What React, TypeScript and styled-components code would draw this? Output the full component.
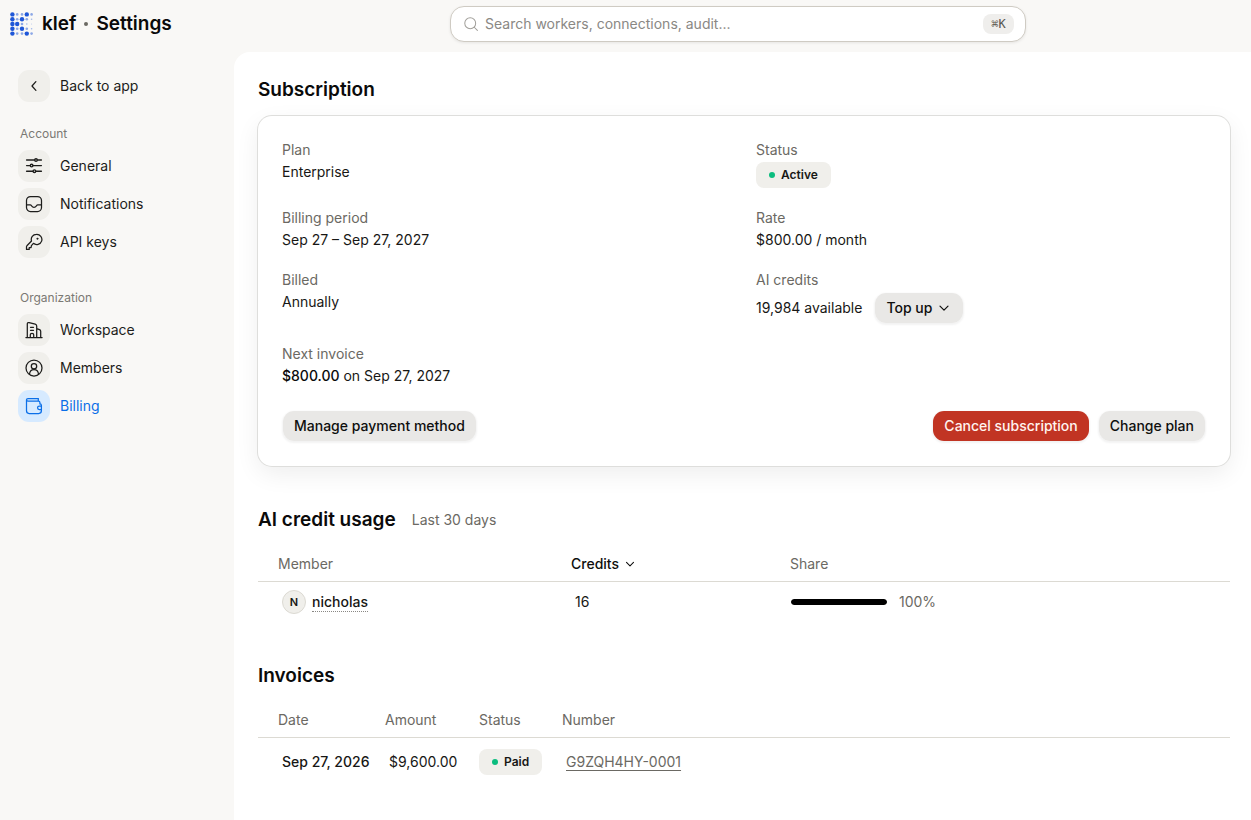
import React from "react";
import styled, { createGlobalStyle, css } from "styled-components";

const GlobalStyle = createGlobalStyle`
  *, *::before, *::after { box-sizing: border-box; }
  html, body { margin: 0; padding: 0; }
  body {
    background: #f9f8f6;
    color: #171715;
    font-family: Inter, "Liberation Sans", sans-serif;
    font-size: 14px;
    line-height: 20px;
  }
  h1, h2, h3, dl, dd, dt, p, ul { margin: 0; padding: 0; }
  ul { list-style: none; }
  button, input { font: inherit; color: inherit; }
`;

const Shell = styled.div`
  display: flex;
  flex-direction: column;
  min-height: 100vh;
`;

const Header = styled.header`
  display: flex;
  align-items: center;
  height: 52px;
  padding: 0 9px 4px 10px;
`;

const Brand = styled.h1`
  display: flex;
  align-items: center;
  gap: 8px;
  width: 224px;
  flex-shrink: 0;
  font-size: 19px;
  line-height: 28px;
  font-weight: 600;
  color: #0a0a0a;
`;

const BrandDot = styled.span`
  width: 4px;
  height: 4px;
  border-radius: 50%;
  background: #6b6963;
`;

const SearchArea = styled.div`
  flex: 1;
  display: flex;
  justify-content: center;
`;

const SearchBox = styled.label`
  display: flex;
  align-items: center;
  gap: 7px;
  width: 100%;
  max-width: 576px;
  height: 36px;
  padding: 0 11px 0 13px;
  border: 1px solid #cfcbc3;
  border-radius: 14px;
  background: #fff;
  box-shadow: 0 1px 3px rgba(0, 0, 0, 0.08);
  color: #a09e99;
`;

const SearchInput = styled.input`
  flex: 1;
  min-width: 0;
  padding: 0;
  border: 0;
  outline: 0;
  background: transparent;
  color: #171715;
  &::placeholder { color: #8a8884; opacity: 1; }
`;

const Shortcut = styled.kbd`
  display: flex;
  align-items: center;
  justify-content: center;
  width: 31px;
  height: 20px;
  border-radius: 8px;
  background: #efeeec;
  color: #57544e;
  font-family: "DejaVu Sans Mono", monospace;
  font-size: 12px;
`;

const Body = styled.div`
  flex: 1;
  display: flex;
`;

const Sidebar = styled.nav`
  width: 234px;
  flex-shrink: 0;
  padding: 18px;
`;

const NavList = styled.ul`
  display: flex;
  flex-direction: column;
  gap: 6px;
`;

const NavGroup = styled.section<{ $gap: number }>`
  margin-top: ${(p) => p.$gap}px;
`;

const NavHeading = styled.h2`
  padding-left: 2px;
  margin-bottom: 8px;
  font-size: 12px;
  line-height: 16px;
  font-weight: 400;
  color: #7b7974;
`;

const NavIcon = styled.span<{ $active?: boolean }>`
  display: flex;
  align-items: center;
  justify-content: center;
  width: 32px;
  height: 32px;
  border-radius: 11px;
  background: ${(p) => (p.$active ? "#d6eaff" : "#f0efeb")};
`;

const NavLink = styled.a<{ $active?: boolean }>`
  display: flex;
  align-items: center;
  gap: 10px;
  color: ${(p) => (p.$active ? "#0b6fe8" : "#1d1d1b")};
  text-decoration: none;
`;

const Main = styled.main`
  flex: 1;
  min-width: 0;
  display: flex;
  flex-direction: column;
  gap: 40px;
  padding: 24px 21px 34px 24px;
  border-top-left-radius: 16px;
  background: #fff;
`;

const SectionHead = styled.div`
  display: flex;
  align-items: center;
  gap: 16px;
  margin-bottom: 12px;
`;

const SectionTitle = styled.h2`
  font-size: 19px;
  line-height: 28px;
  font-weight: 600;
  color: #0a0a0a;
`;

const Muted = styled.span`
  color: #6b6963;
`;

const Card = styled.div`
  padding: 24px;
  border-radius: 14px;
  background: #fff;
  box-shadow: 0 0 0 1px #dededc, 0 8px 24px rgba(0, 0, 0, 0.07);
`;

const Details = styled.dl`
  display: grid;
  grid-template-columns: 1fr 1fr;
  gap: 20px 24px;
`;

const Detail = styled.div`
  display: flex;
  flex-direction: column;
  gap: 2px;
  dt { color: #6b6963; }
  dd { display: flex; align-items: center; gap: 12px; }
  strong { font-weight: 500; color: #0a0a0a; }
`;

const Badge = styled.span`
  display: inline-flex;
  align-items: center;
  gap: 6px;
  height: 26px;
  padding: 0 13px;
  border-radius: 8px;
  background: #f0efeb;
  color: #171715;
  font-size: 12px;
  line-height: 16px;
  font-weight: 600;
  vertical-align: middle;
  &::before {
    content: "";
    width: 6px;
    height: 6px;
    border-radius: 50%;
    background: #0bbd7f;
  }
`;

const Button = styled.button<{ $danger?: boolean }>`
  display: inline-flex;
  align-items: center;
  gap: 4px;
  height: 32px;
  padding: 0 11px;
  border: 1px solid transparent;
  border-radius: 12px;
  background: #e9e8e6;
  background-clip: padding-box;
  box-shadow: 0 1px 2px rgba(0, 0, 0, 0.05);
  color: #0f0f0e;
  font-weight: 500;
  white-space: nowrap;
  cursor: pointer;
  ${(p) =>
    p.$danger &&
    css`
      background: #c13423;
      background-clip: padding-box;
      color: #fff3ef;
    `}
`;

const Actions = styled.div`
  display: flex;
  gap: 8px;
  margin-top: 24px;
`;

const Spacer = styled.div`
  flex: 1;
`;

const Table = styled.table`
  width: 100%;
  table-layout: fixed;
  border-collapse: separate;
  border-spacing: 0;
  text-align: left;
`;

const Col = styled.col<{ $width?: number }>`
  width: ${(p) => (p.$width ? `${p.$width}px` : "auto")};
`;

const Th = styled.th`
  height: 36px;
  padding: 0;
  border-bottom: 1px solid #dcdad3;
  color: #6b6963;
  font-weight: 400;
  white-space: nowrap;
  &:first-child { padding-left: 20px; }
`;

const Td = styled.td<{ $height: number; $flush?: boolean; $strong?: boolean }>`
  height: ${(p) => p.$height}px;
  padding: 0 0 0 ${(p) => (p.$flush ? 0 : 4)}px;
  font-weight: ${(p) => (p.$strong ? 500 : 400)};
  white-space: nowrap;
  &:first-child { padding-left: 24px; }
`;

const SortButton = styled.button`
  display: flex;
  align-items: center;
  gap: 4px;
  padding: 0;
  border: 0;
  background: none;
  color: #0f0f0e;
  font-weight: 500;
  cursor: pointer;
`;

const Member = styled.div`
  display: flex;
  align-items: center;
  gap: 6px;
`;

const Avatar = styled.span`
  display: flex;
  align-items: center;
  justify-content: center;
  width: 24px;
  height: 24px;
  border: 1px solid #dcdad3;
  border-radius: 50%;
  background: #f0efeb;
  font-size: 11px;
  font-weight: 600;
`;

const MemberName = styled.span`
  border-bottom: 1px dotted #8a8884;
  line-height: 18px;
  font-weight: 500;
`;

const Share = styled.div`
  display: flex;
  align-items: center;
  gap: 12px;
  padding-left: 1px;
`;

const Track = styled.div`
  width: 96px;
  height: 6px;
  border-radius: 3px;
  background: #e9e8e6;
  overflow: hidden;
`;

const Fill = styled.div`
  height: 100%;
  border-radius: 3px;
  background: #000;
`;

const InvoiceLink = styled.a`
  color: #6b6963;
  text-decoration: underline;
  text-underline-offset: 3px;
`;

const Icon = ({ size = 18, width = 1.25, children }: { size?: number; width?: number; children: React.ReactNode }) => (
  <svg
    width={size}
    height={size}
    viewBox="0 0 18 18"
    fill="none"
    stroke="currentColor"
    strokeWidth={width}
    strokeLinecap="round"
    strokeLinejoin="round"
    aria-hidden="true"
  >
    {children}
  </svg>
);

const Chevron = ({ size = 16 }: { size?: number }) => (
  <svg width={size} height={size} viewBox="0 0 16 16" fill="none" stroke="currentColor" strokeWidth={1.2} strokeLinecap="round" strokeLinejoin="round" aria-hidden="true">
    <path d="M4 6.2 8 10.2 12 6.2" />
  </svg>
);

const icons = {
  back: <path d="M10.9 4.6 7 9l3.9 4.4" />,
  general: (
    <>
      <path d="M1.600 3H9.400M12.700 3h3.700M1.600 8.600h3.400M8.100 8.600h8.300M1.600 14.200h6.200M11 14.200h5.400" strokeWidth="1.400" />
      <circle cx="11" cy="3" r="1.300" strokeWidth="1.400" />
      <circle cx="6.600" cy="8.600" r="1.300" strokeWidth="1.400" />
      <circle cx="9.400" cy="14.200" r="1.300" strokeWidth="1.400" />
    </>
  ),
  notifications: (
    <>
      <rect x="1.5" y="1.5" width="15" height="15" rx="4" />
      <path d="M1.7 9.800h3.500c.9 0 1.100.6 1.600 1.300.5.8 1.200 1.200 2.200 1.200s1.700-.4 2.200-1.200c.5-.7.7-1.300 1.600-1.300h3.500" />
    </>
  ),
  keys: (
    <>
      <path d="M11.400 1.400a5.100 5.100 0 0 0-4.900 6.600L1.900 12.800a1.600 1.600 0 0 0-.4 1.100v2.500h2.700v-1.900h1.900l.3-1.900 2-2.300a5.100 5.100 0 1 0 3-8.900Z" />
      <circle cx="12.400" cy="5.700" r=".7" fill="currentColor" strokeWidth=".5" />
    </>
  ),
  workspace: (
    <>
      <path d="M.9 16.500h16.200M2.300 16.500V3.100c0-1.100.7-1.800 1.800-1.500l6.100 1.600c1 .3 1.500.9 1.500 1.900v11.400M11.700 7.600l2.800 1.100c.8.3 1.200.8 1.200 1.600v6.200" />
      <path d="M5.500 6.300h3M5.500 9.300h3M5.300 16.300v-2.500c0-.8.6-1.400 1.700-1.400s1.700.6 1.700 1.400v2.500" />
    </>
  ),
  members: (
    <>
      <circle cx="9" cy="9" r="8" />
      <circle cx="9" cy="7.200" r="2.700" />
      <path d="M4.500 15.300c.2-2.800 2-4.700 4.500-4.700s4.300 1.900 4.500 4.700" />
    </>
  ),
  billing: (
    <>
      <path d="M14.900 6.900V5.600c0-.9-.6-1.500-1.500-1.500H3c-.9 0-1.500-.5-1.500-1.300S2.100 1.500 3 1.500h10.200M1.500 2.800v11c0 1.700.9 2.700 2.700 2.700h9.400c1.800 0 2.800-1 2.800-2.700V8.500c0-1-.5-1.600-1.500-1.600M13.300 1.500v2.400" />
      <path d="M16.400 9h-2.100a1.700 1.700 0 0 0 0 3.500h2.100" />
    </>
  ),
};

type IconName = keyof typeof icons;

const NavItem = ({ icon, label, active }: { icon: IconName; label: string; active?: boolean }) => (
  <NavLink href="#" $active={active} aria-current={active ? "page" : undefined}>
    <NavIcon $active={active}>
      <Icon>{icons[icon]}</Icon>
    </NavIcon>
    {label}
  </NavLink>
);

const groups: { title: string; gap: number; items: { icon: IconName; label: string; active?: boolean }[] }[] = [
  {
    title: "Account",
    gap: 24,
    items: [
      { icon: "general", label: "General" },
      { icon: "notifications", label: "Notifications" },
      { icon: "keys", label: "API keys" },
    ],
  },
  {
    title: "Organization",
    gap: 32,
    items: [
      { icon: "workspace", label: "Workspace" },
      { icon: "members", label: "Members" },
      { icon: "billing", label: "Billing", active: true },
    ],
  },
];

/* Dot-matrix K: the digit is the dot's strength, 4 the strongest. */
const logoRows = ["42242", "42421", "44210", "42421", "42242"];
const dotRadius = [0.5, 0.8, 1.3, 1.8, 2.2];
const dotOpacity = [0.3, 0.4, 0.5, 0.8, 1];

const Logo = () => (
  <svg width="24" height="24" viewBox="0 0 24 24" fill="#1f57d8" aria-hidden="true">
    {logoRows.flatMap((row, y) =>
      row.split("").map((level, x) => (
        <circle
          key={`${x}-${y}`}
          cx={2.4 + x * 4.8}
          cy={2.4 + y * 4.8}
          r={dotRadius[Number(level)]}
          opacity={dotOpacity[Number(level)]}
        />
      ))
    )}
  </svg>
);

export default function App() {
  const share = 100;
  return (
    <>
      <GlobalStyle />
      <Shell>
        <Header>
          <Brand>
            <Logo />
            <span>klef</span>
            <BrandDot />
            <span>Settings</span>
          </Brand>
          <SearchArea>
            <SearchBox>
              <Icon size={14} width={1.3}>
                <circle cx="8" cy="8" r="7" />
                <path d="m13.200 13.200 4 4" />
              </Icon>
              <SearchInput type="text" aria-label="Search" placeholder="Search workers, connections, audit..." />
              <Shortcut>⌘K</Shortcut>
            </SearchBox>
          </SearchArea>
        </Header>
        <Body>
          <Sidebar>
            <NavItem icon="back" label="Back to app" />
            {groups.map((group) => (
              <NavGroup key={group.title} $gap={group.gap}>
                <NavHeading>{group.title}</NavHeading>
                <NavList>
                  {group.items.map((item) => (
                    <li key={item.label}>
                      <NavItem {...item} />
                    </li>
                  ))}
                </NavList>
              </NavGroup>
            ))}
          </Sidebar>
          <Main>
            <section>
              <SectionHead>
                <SectionTitle>Subscription</SectionTitle>
              </SectionHead>
              <Card>
                <Details>
                  <Detail>
                    <dt>Plan</dt>
                    <dd>Enterprise</dd>
                  </Detail>
                  <Detail>
                    <dt>Status</dt>
                    <dd><Badge>Active</Badge></dd>
                  </Detail>
                  <Detail>
                    <dt>Billing period</dt>
                    <dd>Sep 27 – Sep 27, 2027</dd>
                  </Detail>
                  <Detail>
                    <dt>Rate</dt>
                    <dd>$800.00 / month</dd>
                  </Detail>
                  <Detail>
                    <dt>Billed</dt>
                    <dd>Annually</dd>
                  </Detail>
                  <Detail>
                    <dt>AI credits</dt>
                    <dd>
                      19,984 available
                      <Button type="button">Top up <Chevron /></Button>
                    </dd>
                  </Detail>
                  <Detail>
                    <dt>Next invoice</dt>
                    <dd><span><strong>$800.00</strong> on Sep 27, 2027</span></dd>
                  </Detail>
                </Details>
                <Actions>
                  <Button type="button">Manage payment method</Button>
                  <Spacer />
                  <Button type="button" $danger>Cancel subscription</Button>
                  <Button type="button">Change plan</Button>
                </Actions>
              </Card>
            </section>
            <section>
              <SectionHead>
                <SectionTitle>AI credit usage</SectionTitle>
                <Muted>Last 30 days</Muted>
              </SectionHead>
              <Table>
                <colgroup>
                  <Col $width={313} />
                  <Col $width={219} />
                  <Col />
                </colgroup>
                <thead>
                  <tr>
                    <Th>Member</Th>
                    <Th><SortButton type="button">Credits <Chevron size={14} /></SortButton></Th>
                    <Th>Share</Th>
                  </tr>
                </thead>
                <tbody>
                  <tr>
                    <Td $height={40}>
                      <Member>
                        <Avatar>N</Avatar>
                        <MemberName>nicholas</MemberName>
                      </Member>
                    </Td>
                    <Td $height={40}>16</Td>
                    <Td $height={40} $flush>
                      <Share>
                        <Track><Fill style={{ width: `${share}%` }} /></Track>
                        <Muted>{share}%</Muted>
                      </Share>
                    </Td>
                  </tr>
                </tbody>
              </Table>
            </section>
            <section>
              <SectionHead>
                <SectionTitle>Invoices</SectionTitle>
              </SectionHead>
              <Table>
                <colgroup>
                  <Col $width={127} />
                  <Col $width={94} />
                  <Col $width={83} />
                  <Col />
                </colgroup>
                <thead>
                  <tr>
                    <Th>Date</Th>
                    <Th>Amount</Th>
                    <Th>Status</Th>
                    <Th>Number</Th>
                  </tr>
                </thead>
                <tbody>
                  <tr>
                    <Td $height={48} $strong>Sep 27, 2026</Td>
                    <Td $height={48}>$9,600.00</Td>
                    <Td $height={48} $flush><Badge>Paid</Badge></Td>
                    <Td $height={48}><InvoiceLink href="#">G9ZQH4HY-0001</InvoiceLink></Td>
                  </tr>
                </tbody>
              </Table>
            </section>
          </Main>
        </Body>
      </Shell>
    </>
  );
}
